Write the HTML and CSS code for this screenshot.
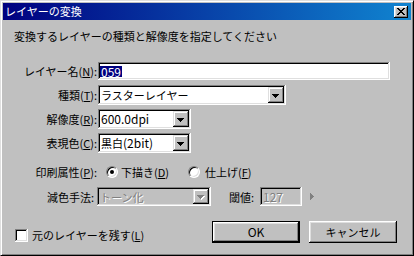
FILE: index.html
```html
<!DOCTYPE html>
<html lang="ja">
<head>
<meta charset="utf-8">
<title>レイヤーの変換</title>
<link rel="stylesheet" href="styles.css">
</head>
<body>
<div class="window">
  <div class="titlebar">
    <span class="title">レイヤーの変換</span>
    <span class="close"><svg width="8" height="7" viewBox="0 0 8 7" shape-rendering="crispEdges"><path d="M0 0h2v1H0zM6 0h2v1H6zM1 1h2v1H1zM5 1h2v1H5zM2 2h4v1H2zM3 3h2v1H3zM2 4h4v1H2zM1 5h2v1H1zM5 5h2v1H5zM0 6h2v1H0zM6 6h2v1H6z" fill="#000"/></svg></span>
  </div>
  <div class="content">
    <div class="heading">変換するレイヤーの種類と解像度を指定してください</div>

    <div class="row row-name">
      <span class="label">レイヤー名(<u>N</u>):</span>
      <div class="field field-name"><span class="sel">059</span></div>
    </div>

    <div class="row row-kind">
      <span class="label">種類(<u>T</u>):</span>
      <div class="combo combo-kind">
        <span class="combo-text">ラスターレイヤー</span>
        <span class="drop"><svg width="7" height="4" viewBox="0 0 7 4" shape-rendering="crispEdges"><path d="M0 0h7v1H0zM1 1h5v1H1zM2 2h3v1H2zM3 3h1v1H3z" fill="#000"/></svg></span>
      </div>
    </div>

    <div class="row row-res">
      <span class="label">解像度(<u>R</u>):</span>
      <div class="combo combo-small">
        <span class="combo-text latin">600.0dpi</span>
        <span class="drop"><svg width="7" height="4" viewBox="0 0 7 4" shape-rendering="crispEdges"><path d="M0 0h7v1H0zM1 1h5v1H1zM2 2h3v1H2zM3 3h1v1H3z" fill="#000"/></svg></span>
      </div>
    </div>

    <div class="row row-color">
      <span class="label">表現色(<u>C</u>):</span>
      <div class="combo combo-small">
        <span class="combo-text">黒白<span class="latin">(2bit)</span></span>
        <span class="drop"><svg width="7" height="4" viewBox="0 0 7 4" shape-rendering="crispEdges"><path d="M0 0h7v1H0zM1 1h5v1H1zM2 2h3v1H2zM3 3h1v1H3z" fill="#000"/></svg></span>
      </div>
    </div>

    <div class="row row-print">
      <span class="label">印刷属性(<u>P</u>):</span>
      <span class="radio checked"></span>
      <span class="opt">下描き(<u>D</u>)</span>
      <span class="radio radio-2"></span>
      <span class="opt">仕上げ(<u>F</u>)</span>
    </div>

    <div class="row row-reduce">
      <span class="label label-reduce">減色手法:</span>
      <div class="combo combo-disabled">
        <span class="combo-text disabled-text">トーン化</span>
        <span class="drop"><svg width="8" height="5" viewBox="0 0 8 5" shape-rendering="crispEdges"><path d="M1 1h7v1H1zM2 2h5v1H2zM3 3h3v1H3zM4 4h1v1H4z" fill="#fff"/><path d="M0 0h7v1H0zM1 1h5v1H1zM2 2h3v1H2zM3 3h1v1H3z" fill="#808080"/></svg></span>
      </div>
      <span class="label-thresh">閾値:</span>
      <div class="field field-thresh"><span class="disabled-text latin">127</span></div>
      <span class="arrow-right"><svg width="4" height="7" viewBox="0 0 4 7" shape-rendering="crispEdges"><path d="M0 0h1v7H0zM1 1h1v5H1zM2 2h1v3H2zM3 3h1v1H3z" fill="#808080"/></svg></span>
    </div>

    <div class="row row-bottom">
      <div class="check-wrap">
        <span class="checkbox"></span>
        <span class="opt">元のレイヤーを残す(<u>L</u>)</span>
      </div>
      <div class="buttons">
        <div class="btn btn-default"><span class="latin">OK</span></div>
        <div class="btn">キャンセル</div>
      </div>
    </div>
  </div>
</div>
</body>
</html>
```

FILE: styles.css
```css
* { box-sizing: border-box; }
html, body { margin: 0; padding: 0; }
body {
  width: 414px;
  height: 256px;
  overflow: hidden;
  background: #c0c0c0;
  font-family: "Noto Sans CJK JP", sans-serif;
  font-size: 11px;
  line-height: 14px;
  color: #000;
}
u { text-decoration: underline; text-underline-offset: 1px; }
.latin { font-size: 12px; }

.window {
  width: 414px;
  height: 256px;
  background: #c0c0c0;
  border: 1px solid;
  border-color: #dfdfdf #000 #000 #dfdfdf;
  box-shadow: inset 1px 1px #fff, inset -1px -1px #808080;
  padding: 2px;
  display: flex;
  flex-direction: column;
}

.titlebar {
  height: 17px;
  flex: none;
  background: linear-gradient(to right, #000080, #1084d0);
  display: flex;
  align-items: center;
  justify-content: space-between;
  padding: 0 3px 0 2px;
  color: #fff;
}
.title { font-size: 11px; line-height: 17px; }
.close {
  width: 14px;
  height: 12px;
  background: #c0c0c0;
  box-shadow: inset -1px -1px #000, inset 1px 1px #fff, inset -2px -2px #808080, inset 2px 2px #dfdfdf;
  display: flex;
  align-items: center;
  justify-content: center;
  padding-right: 1px;
}
.close svg { display: block; }

.content { display: flex; flex-direction: column; }
.heading { margin: 9px 0 0 11px; line-height: 14px; }

.row { display: flex; align-items: center; }
.label { width: 94px; flex: none; text-align: right; white-space: nowrap; }

.row-name { margin-top: 19px; }
.row-kind { margin-top: 5px; }
.row-res { margin-top: 4px; }
.row-color { margin-top: 4px; }
.row-print { margin-top: 11px; height: 16px; }
.row-reduce { margin-top: 7px; }
.row-bottom { margin-top: 15px; align-items: flex-start; }

.field {
  background: #fff;
  box-shadow: inset -1px -1px #fff, inset 1px 1px #808080, inset -2px -2px #dfdfdf, inset 2px 2px #000;
  display: flex;
  align-items: center;
}
.field-name { margin-left: 1px; width: 292px; height: 18px; padding-left: 2px; }
.sel {
  background: #000080;
  color: #fff;
  font-size: 12px;
  line-height: 11px;
  padding: 0 1px;
}

.combo {
  position: relative;
  margin-left: 1px;
  height: 20px;
  background: #fff;
  box-shadow: inset -1px -1px #fff, inset 1px 1px #808080, inset -2px -2px #dfdfdf, inset 2px 2px #000;
  display: flex;
  align-items: center;
  padding: 0 2px 0 3px;
  justify-content: space-between;
}
.combo-kind { width: 188px; }
.combo-small { width: 93px; }
.combo-text { white-space: nowrap; }
.drop {
  width: 16px;
  height: 16px;
  background: #c0c0c0;
  box-shadow: inset -1px -1px #000, inset 1px 1px #dfdfdf, inset -2px -2px #808080, inset 2px 2px #fff;
  display: flex;
  align-items: center;
  justify-content: center;
  padding: 1px 1px 0 0;
}
.drop svg { display: block; }

.radio {
  width: 12px;
  height: 12px;
  flex: none;
  border-radius: 50%;
  background: #fff;
  border: 1px solid;
  border-color: #808080 #fff #fff #808080;
  box-shadow: inset 1px 1px #000, inset -1px -1px #dfdfdf;
  margin-left: 9px;
  margin-right: 3px;
  position: relative;
}
.radio.checked::after {
  content: "";
  position: absolute;
  left: 3px;
  top: 3px;
  width: 4px;
  height: 4px;
  border-radius: 50%;
  background: #000;
}
.radio-2 { margin-left: 19px; margin-right: 5px; }

.label-reduce { padding-right: 3px; }
.combo-disabled {
  margin-left: 0;
  width: 114px;
  height: 19px;
  background: #c0c0c0;
}
.combo-disabled .drop { height: 15px; }
.disabled-text { color: #808080; text-shadow: 1px 1px #fff; }
.label-thresh { margin-left: 18px; width: 31px; white-space: nowrap; }
.field-thresh {
  width: 42px;
  height: 19px;
  background: #c0c0c0;
  padding-left: 3px;
}
.arrow-right { margin-left: 8px; display: flex; }
.arrow-right svg { display: block; }

.check-wrap { display: flex; align-items: center; margin-left: 12px; margin-top: 7px; }
.checkbox {
  width: 13px;
  height: 13px;
  background: #fff;
  box-shadow: inset -1px -1px #fff, inset 1px 1px #808080, inset -2px -2px #dfdfdf, inset 2px 2px #000;
  margin-right: 4px;
}
.buttons { margin-left: auto; display: flex; gap: 9px; padding-right: 14px; }
.btn {
  width: 88px;
  height: 22px;
  background: #c0c0c0;
  box-shadow: inset -1px -1px #000, inset 1px 1px #fff, inset -2px -2px #808080, inset 2px 2px #dfdfdf;
  display: flex;
  align-items: center;
  justify-content: center;
}
.btn-default {
  border: 1px solid #000;
}
```
